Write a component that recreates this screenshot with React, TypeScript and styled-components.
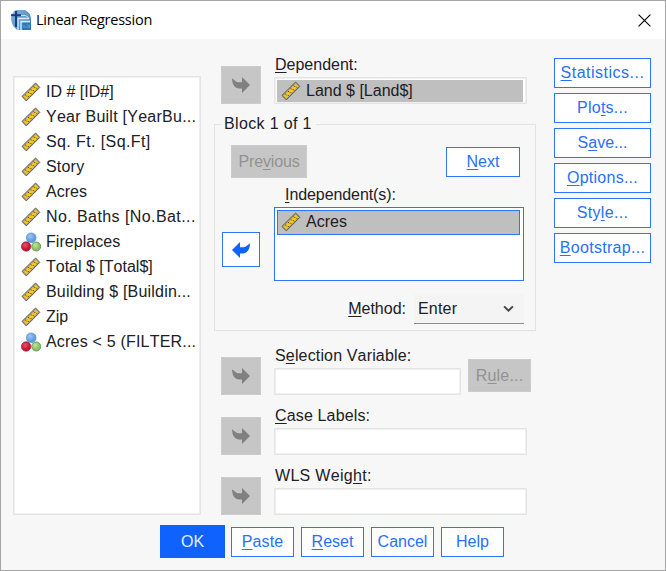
import React from "react";
import styled, { createGlobalStyle, css } from "styled-components";

const BLUE = "#0f62fe";

const Global = createGlobalStyle`
  *, *::before, *::after { box-sizing: border-box; }
  body { margin: 0; background: #f7f7f7; }
  button { font: inherit; padding: 0; margin: 0; cursor: default; }
`;

const Window = styled.div`
  width: 666px;
  height: 571px;
  display: flex;
  flex-direction: column;
  border: 1px solid #a5a5a5;
  background: #f7f7f7;
  color: #202024;
  font: 16px/20px "Liberation Sans", Arial, sans-serif;
  font-kerning: none;
  white-space: nowrap;
  overflow: hidden;
`;

const TitleBar = styled.header`
  height: 38px;
  flex: none;
  display: flex;
  align-items: center;
  padding: 0 14px 0 10px;
  background: #fff;
`;

const Title = styled.h1`
  flex: 1;
  margin: 0 0 0 5px;
  color: #000;
  font: 400 14.5px/20px "Open Sans", "Noto Sans", sans-serif;
  letter-spacing: -0.24px;
`;

const Body = styled.main`
  height: 476px;
  flex: none;
  display: flex;
  padding-left: 12px;
`;

const softFrame = css`
  border: 1px solid #e4e4e4;
  box-shadow: inset 0 0 0 1px #efefef;
`;

const VariableList = styled.ul`
  width: 188px;
  height: 439px;
  margin: 37px 12px 0 0;
  padding: 2px 0 0 7px;
  list-style: none;
  background: #fff;
  ${softFrame}
`;

const Variable = styled.li<{ $spacing?: number }>`
  display: flex;
  align-items: center;
  height: 25px;
  gap: 5px;
  letter-spacing: ${(p) => p.$spacing ?? 0}px;
`;

const Center = styled.section`
  width: 323px;
  margin-right: 18px;
`;

const FieldRow = styled.div<{ $top: number }>`
  display: flex;
  align-items: flex-end;
  height: 49px;
  margin-top: ${(p) => p.$top}px;
  padding-left: 8px;
`;

const MoveButton = styled.button<{ $active?: boolean }>`
  flex: none;
  display: grid;
  place-items: center;
  width: 40px;
  height: 38px;
  border: 1px solid #cbcbcb;
  background: #c6c6c6;
  color: #808080;
  ${(p) =>
    p.$active &&
    css`
      width: 38px;
      height: 35px;
      border: 1px solid #2e74fa;
      background: #fff;
      color: ${BLUE};
    `}
`;

const FieldStack = styled.label<{ $width: number }>`
  display: flex;
  flex-direction: column;
  justify-content: space-between;
  width: ${(p) => p.$width}px;
  height: 49px;
  margin-left: 13px;
`;

const FieldLabel = styled.span<{ $spacing?: number }>`
  padding-left: 1px;
  letter-spacing: ${(p) => p.$spacing ?? 0}px;
`;

const FieldBox = styled.span`
  display: block;
  height: 27px;
  padding: 2px;
  background: #fff;
  ${softFrame}
`;

const Selected = styled.span<{ $outlined?: boolean }>`
  display: flex;
  align-items: center;
  gap: 5px;
  width: ${(p) => (p.$outlined ? 243 : 246)}px;
  height: ${(p) => (p.$outlined ? 25 : 22)}px;
  padding-left: ${(p) => (p.$outlined ? 3 : 4)}px;
  background: #bfbfbf;
  border: ${(p) => (p.$outlined ? `1px solid #2e74fa` : "0")};
`;

const Block = styled.fieldset`
  display: flex;
  flex-direction: column;
  width: 322px;
  height: 217px;
  margin: 10px 0 0 1px;
  padding: 0 11px 0 7px;
  border: 1px solid #e2e2e2;
`;

const Legend = styled.legend`
  height: 20px;
  margin-left: -1px;
  padding: 0 4px 0 3px;
  letter-spacing: 0.35px;
`;

const Paging = styled.div`
  display: flex;
  justify-content: space-between;
  align-items: center;
  height: 33px;
  margin-top: 11px;
  padding: 0 4px 0 9px;
`;

const IndependentLabel = styled.div`
  margin: 7px 0 0 63px;
  letter-spacing: -0.08px;
`;

const IndependentRow = styled.div`
  display: flex;
  align-items: center;
  height: 75px;
  margin-top: 1px;
  gap: 14px;
`;

const IndependentList = styled.div`
  width: 250px;
  height: 74px;
  padding: 2px;
  border: 1px solid #2e74fa;
  background: #fff;
`;

const IndependentSlot = styled.div`
  margin-top: 12px;
  display: flex;
`;

const MethodRow = styled.div`
  display: flex;
  justify-content: flex-end;
  align-items: center;
  height: 30px;
  margin-top: 13px;
  gap: 8px;
`;

const Dropdown = styled.div`
  display: flex;
  align-items: center;
  justify-content: space-between;
  width: 110px;
  height: 30px;
  padding: 0 10px 0 4px;
  background: #f4f4f4;
  border-bottom: 1px solid #8d8d8d;
  letter-spacing: 0.2px;
`;

const Button = styled.button<{
  $width: number;
  $kind?: "primary" | "disabled";
  $spacing?: number;
}>`
  flex: none;
  width: ${(p) => p.$width}px;
  height: ${(p) => (p.$kind ? 33 : 30)}px;
  border: 1px solid #2e74fa;
  background: #fff;
  color: #2870fa;
  line-height: 20px;
  letter-spacing: ${(p) => p.$spacing ?? 0}px;
  ${(p) =>
    p.$kind === "primary" &&
    css`
      border-color: ${BLUE};
      background: ${BLUE};
      color: #e4edff;
    `}
  ${(p) =>
    p.$kind === "disabled" &&
    css`
      border-color: #cbcbcb;
      background: #c6c6c6;
      color: #929292;
    `}
`;

const RuleSlot = styled.div`
  margin: 0 0 3px 7px;
`;

const SideButtons = styled.nav`
  display: flex;
  flex-direction: column;
  gap: 5px;
  padding-top: 19px;
`;

const Footer = styled.footer`
  display: flex;
  align-items: center;
  height: 33px;
  margin-top: 10px;
  padding-left: 159px;
  gap: 6px;
`;

const FooterGroup = styled.div`
  display: flex;
  gap: 7px;
`;

const Mnemonic = styled.span`
  text-decoration: underline;
  text-decoration-thickness: 1px;
  text-underline-offset: 2px;
  text-decoration-skip-ink: none;
`;

/* Renders a caption whose access key is marked with "&". */
function Caption({ text }: { text: string }) {
  const i = text.indexOf("&");
  if (i < 0) return <>{text}</>;
  return (
    <>
      {text.slice(0, i)}
      <Mnemonic>{text[i + 1]}</Mnemonic>
      {text.slice(i + 2)}
    </>
  );
}

const RulerIcon = () => (
  <svg width="20" height="20" viewBox="0 0 20 20">
    <path d="M1 14.4 14.6 1l4.2 4.4L5.3 18.9z" fill="#aaa890" stroke="#5d5a48" strokeWidth="1" />
    <path d="M3 14.8 14.9 3.1l2.2 2.2L5.2 17z" fill="#ffc80a" />
    <path
      d="m4.2 12.8 1.3 1.3M7 10l1.3 1.3M9.8 7.3l1.3 1.3M12.6 4.5l1.3 1.3M7.8 15l-1.1-1.1M10.6 12.2 9.5 11.1M13.4 9.4l-1.1-1.1M16 6.7l-1-1"
      stroke="#57491a"
      strokeWidth="1"
    />
  </svg>
);

const NominalIcon = () => (
  <svg width="20" height="20" viewBox="0 0 20 20">
    <defs>
      <radialGradient id="nb" cx=".4" cy=".35"><stop stopColor="#a0c8f2" /><stop offset="1" stopColor="#5b9be0" /></radialGradient>
      <radialGradient id="nr" cx=".4" cy=".35"><stop stopColor="#e2566a" /><stop offset="1" stopColor="#c01230" /></radialGradient>
      <radialGradient id="ng" cx=".4" cy=".35"><stop stopColor="#c2e2a2" /><stop offset="1" stopColor="#86bf66" /></radialGradient>
    </defs>
    <circle cx="10.2" cy="5.8" r="4.9" fill="url(#nb)" stroke="#5f97d6" strokeWidth=".7" />
    <circle cx="5.1" cy="14.5" r="4.7" fill="url(#nr)" stroke="#a01c34" strokeWidth=".7" />
    <circle cx="15.2" cy="14.5" r="4.5" fill="url(#ng)" stroke="#629a4a" strokeWidth=".9" />
  </svg>
);

const ArrowIcon = ({ left }: { left?: boolean }) => (
  <svg width="18" height="16" viewBox="0 0 18 16">
    <path
      transform={left ? "matrix(-1 0 0 1 18 0)" : undefined}
      d="M0 1.3 2.8 3.4C4.2 4.7 5.8 5.4 7.8 5.3H10V0L18 8l-8 8v-4.5H7.3C3 11.5.2 8 0 1.3z"
      fill="currentColor"
    />
  </svg>
);

const AppIcon = () => (
  <svg width="20" height="20" viewBox="0 0 20 20">
    <defs>
      <linearGradient id="app" x1="0" y1="0" x2="1" y2="1">
        <stop stopColor="#8fb6da" />
        <stop offset="1" stopColor="#2b7cbc" />
      </linearGradient>
    </defs>
    <path d="M5 0h9q6 3 6 9v11H6Q0 15 0 8 1 2 5 0z" fill="url(#app)" />
    <path d="M7 20V8.5h11M10 20v-8.5h9" fill="none" stroke="#dfecf7" strokeWidth="1.4" />
    <path d="M7.5 5.5H14q3 .6 4 3" fill="none" stroke="#c8dff3" />
    <path d="M0 4.2h10v2H0z" fill="#153f7c" />
    <path d="M4 1h2.1v16H4z" fill="#153f7c" />
    <path d="M11.5 13H20v7h-8.5z" fill="#2878bb" />
    <path d="M13 18v-3m2 3v-2m2 2v-4m1.5 4v-3" stroke="#5fa7df" strokeWidth=".8" />
  </svg>
);

const CloseIcon = () => (
  <svg width="13" height="13" viewBox="0 0 13 13">
    <path d="m.6.6 11.8 11.8M12.4.6.6 12.4" stroke="#000" strokeWidth="1.15" />
  </svg>
);

const Chevron = () => (
  <svg width="11" height="8" viewBox="0 0 11 8">
    <path d="m1.1 1.4 4.4 4.2 4.4-4.2" fill="none" stroke="#444" strokeWidth="2" />
  </svg>
);

const variables: { name: string; nominal?: boolean; spacing?: number }[] = [
  { name: "ID # [ID#]" },
  { name: "Year Built [YearBu...", spacing: 0.25 },
  { name: "Sq. Ft. [Sq.Ft]", spacing: 0.4 },
  { name: "Story", spacing: 0.2 },
  { name: "Acres" },
  { name: "No. Baths [No.Bat...", spacing: 0.42 },
  { name: "Fireplaces", nominal: true, spacing: 0.05 },
  { name: "Total $ [Total$]" },
  { name: "Building $ [Buildin...", spacing: 0.2 },
  { name: "Zip" },
  { name: "Acres < 5 (FILTER...", nominal: true, spacing: 0.2 },
];

const sideActions = [
  { text: "&Statistics...", spacing: 0.5 },
  { text: "Plo&ts...", spacing: 0.25 },
  { text: "S&ave...", spacing: 0 },
  { text: "&Options...", spacing: 0.25 },
  { text: "Sty&le...", spacing: 0.35 },
  { text: "&Bootstrap...", spacing: 0.3 },
];

export default function App() {
  return (
    <>
      <Global />
      <Window>
        <TitleBar>
          <AppIcon />
          <Title>Linear Regression</Title>
          <CloseIcon />
        </TitleBar>
        <Body>
          <VariableList>
            {variables.map((v) => (
              <Variable key={v.name} $spacing={v.spacing}>
                {v.nominal ? <NominalIcon /> : <RulerIcon />}
                {v.name}
              </Variable>
            ))}
          </VariableList>
          <Center>
            <FieldRow $top={16}>
              <MoveButton><ArrowIcon /></MoveButton>
              <FieldStack $width={253}>
                <FieldLabel><Caption text="&Dependent:" /></FieldLabel>
                <FieldBox>
                  <Selected><RulerIcon />Land $ [Land$]</Selected>
                </FieldBox>
              </FieldStack>
            </FieldRow>
            <Block>
              <Legend>Block 1 of 1</Legend>
              <Paging>
                <Button $width={76} $kind="disabled" $spacing={-0.15}><Caption text="Pre&vious" /></Button>
                <Button $width={74}><Caption text="&Next" /></Button>
              </Paging>
              <IndependentLabel><Caption text="&Independent(s):" /></IndependentLabel>
              <IndependentRow>
                <IndependentSlot>
                  <MoveButton $active><ArrowIcon left /></MoveButton>
                </IndependentSlot>
                <IndependentList>
                  <Selected $outlined><RulerIcon />Acres</Selected>
                </IndependentList>
              </IndependentRow>
              <MethodRow>
                <span><Caption text="&Method:" /></span>
                <Dropdown>Enter<Chevron /></Dropdown>
              </MethodRow>
            </Block>
            <FieldRow $top={15}>
              <MoveButton><ArrowIcon /></MoveButton>
              <FieldStack $width={187}>
                <FieldLabel $spacing={0.15}><Caption text="S&election Variable:" /></FieldLabel>
                <FieldBox />
              </FieldStack>
              <RuleSlot>
                <Button $width={63} $kind="disabled" $spacing={0.2}><Caption text="R&ule..." /></Button>
              </RuleSlot>
            </FieldRow>
            <FieldRow $top={11}>
              <MoveButton><ArrowIcon /></MoveButton>
              <FieldStack $width={253}>
                <FieldLabel $spacing={0.15}><Caption text="&Case Labels:" /></FieldLabel>
                <FieldBox />
              </FieldStack>
            </FieldRow>
            <FieldRow $top={11}>
              <MoveButton><ArrowIcon /></MoveButton>
              <FieldStack $width={253}>
                <FieldLabel $spacing={0.3}><Caption text="WLS Weig&ht:" /></FieldLabel>
                <FieldBox />
              </FieldStack>
            </FieldRow>
          </Center>
          <SideButtons>
            {sideActions.map((a) => (
              <Button key={a.text} $width={97} $spacing={a.spacing}><Caption text={a.text} /></Button>
            ))}
          </SideButtons>
        </Body>
        <Footer>
          <Button $width={65} $kind="primary">OK</Button>
          <FooterGroup>
            <Button $width={63} $spacing={0.1}><Caption text="&Paste" /></Button>
            <Button $width={63}><Caption text="&Reset" /></Button>
            <Button $width={63}>Cancel</Button>
            <Button $width={63}>Help</Button>
          </FooterGroup>
        </Footer>
      </Window>
    </>
  );
}
